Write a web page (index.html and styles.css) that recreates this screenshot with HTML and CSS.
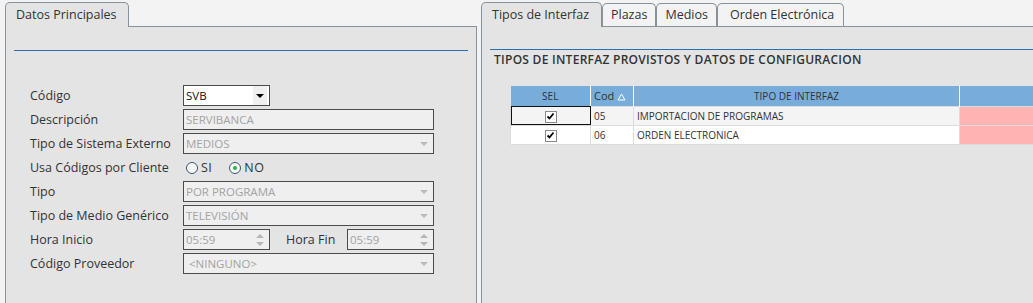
FILE: index.html
```html
<!DOCTYPE html>
<html lang="es">
<head>
    <meta charset="UTF-8">
    <title>Interfaz Externa</title>
    <link rel="stylesheet" href="styles.css">
</head>
<body>
<div class="screen">
    <section class="panel panel-left">
        <div class="tabs">
            <div class="tab active">Datos Principales</div>
        </div>
        <div class="panel-body">
            <div class="rule"></div>
            <div class="form">
                <label>Código</label>
                <div class="field small select enabled">
                    <span>SVB</span>
                    <span class="drop"><i class="tri dark"></i></span>
                </div>

                <label>Descripción</label>
                <div class="field"><span>SERVIBANCA</span></div>

                <label>Tipo de Sistema Externo</label>
                <div class="field select"><span>MEDIOS</span><span class="drop"><i class="tri"></i></span></div>

                <label>Usa Códigos por Cliente</label>
                <div class="radios">
                    <span class="radio"><i class="dot"></i>SI</span>
                    <span class="radio checked"><i class="dot"></i>NO</span>
                </div>

                <label>Tipo</label>
                <div class="field select"><span>POR PROGRAMA</span><span class="drop"><i class="tri"></i></span></div>

                <label>Tipo de Medio Genérico</label>
                <div class="field select"><span>TELEVISIÓN</span><span class="drop"><i class="tri"></i></span></div>

                <label>Hora Inicio</label>
                <div class="hours">
                    <div class="field small spin"><span>05:59</span><span class="arrows"><i class="up"></i><i class="down"></i></span></div>
                    <span class="inline-label">Hora Fin</span>
                    <div class="field small spin"><span>05:59</span><span class="arrows"><i class="up"></i><i class="down"></i></span></div>
                </div>

                <label>Código Proveedor</label>
                <div class="field select"><span class="none">&lt;NINGUNO&gt;</span><span class="drop"><i class="tri"></i></span></div>
            </div>
        </div>
    </section>

    <section class="panel panel-right">
        <div class="tabs">
            <div class="tab active">Tipos de Interfaz</div>
            <div class="tab">Plazas</div>
            <div class="tab">Medios</div>
            <div class="tab wide">Orden Electrónica</div>
        </div>
        <div class="panel-body">
            <div class="rule"></div>
            <h2>TIPOS DE INTERFAZ PROVISTOS Y DATOS DE CONFIGURACION</h2>
            <table class="grid">
                <thead>
                    <tr>
                        <th class="c-sel">SEL</th>
                        <th class="c-cod">Cod <svg class="sort" width="9" height="8" viewBox="0 0 9 8"><path d="M4.5 1 L8 7 L1 7 Z" fill="none" stroke="#fff" stroke-width="1"/></svg></th>
                        <th class="c-tipo">TIPO DE INTERFAZ</th>
                        <th class="c-extra"></th>
                    </tr>
                </thead>
                <tbody>
                    <tr class="odd">
                        <td class="c-sel focus"><span class="check"><svg width="9" height="9" viewBox="0 0 9 9"><path d="M1.5 4.5 L3.5 6.5 L7.5 1.5" fill="none" stroke="#000" stroke-width="1.8"/></svg></span></td>
                        <td>05</td>
                        <td>IMPORTACION DE PROGRAMAS</td>
                        <td class="pink"></td>
                    </tr>
                    <tr>
                        <td class="c-sel"><span class="check"><svg width="9" height="9" viewBox="0 0 9 9"><path d="M1.5 4.5 L3.5 6.5 L7.5 1.5" fill="none" stroke="#000" stroke-width="1.8"/></svg></span></td>
                        <td>06</td>
                        <td>ORDEN ELECTRONICA</td>
                        <td class="pink"></td>
                    </tr>
                </tbody>
            </table>
        </div>
    </section>
</div>
</body>
</html>
```

FILE: styles.css
```css
body {
    margin: 0;
    background-color: #f3f3f3;
    font-family: "Open Sans", Arial, sans-serif;
    font-size: 12.5px;
    color: #333;
    overflow: hidden;
}
.screen {
    display: flex;
    gap: 4px;
    padding: 2px 0 0 5px;
    height: 301px;
    overflow: hidden;
}
.panel {
    display: flex;
    flex-direction: column;
}
.panel-left {
    width: 472px;
    flex: none;
}
.panel-right {
    width: 620px;
    flex: none;
}
.tabs {
    display: flex;
    align-items: flex-end;
    height: 24px;
}
.tab {
    box-sizing: border-box;
    height: 23px;
    border: 1px solid #87929a;
    border-bottom: 0;
    border-radius: 5px 5px 0 0;
    padding: 0 8px;
    line-height: 22px;
    white-space: nowrap;
    color: #333;
}
.tab.wide {
    width: 127px;
    padding: 0 12px;
}
.tab.active {
    position: relative;
    height: 25px;
    margin-bottom: -1px;
    padding: 0 10px;
    background: #e4e4e4;
    line-height: 24px;
}
.panel-left .tab.active {
    width: 124px;
}
.panel-right .tab.active {
    width: 121px;
}
.panel-body {
    flex: 1;
    background: #e4e4e4;
    border: 1px solid #87929a;
    border-bottom: 0;
    overflow: hidden;
}
.panel-left .panel-body {
    padding: 23px 8px 0 8px;
}
.panel-right .panel-body {
    padding: 22px 0 0 8px;
    border-right: 0;
}
.rule {
    height: 1px;
    background: #2a6fae;
}

/* formulario */
.form {
    display: grid;
    grid-template-columns: 153px 251px;
    grid-auto-rows: 21px;
    row-gap: 3px;
    margin: 34px 0 0 16px;
}
.form label {
    display: flex;
    align-items: center;
}
.field {
    box-sizing: border-box;
    display: flex;
    align-items: center;
    height: 21px;
    border: 1px solid #4b4b4b;
    background: #efefef;
    color: #a3a3a3;
    font-size: 11.5px;
    padding-left: 2px;
}
.field > span:first-child {
    flex: 1;
}
.field .none {
    padding-left: 3px;
}
.field.small {
    width: 87px;
}
.field.enabled {
    background: #fff;
    color: #111;
}
.drop {
    display: flex;
    align-items: center;
    justify-content: center;
    width: 14px;
    height: 19px;
    margin-right: 2px;
}
.enabled .drop {
    background: #f0f0f0;
}
.tri {
    width: 0;
    height: 0;
    border-left: 4px solid transparent;
    border-right: 4px solid transparent;
    border-top: 4px solid #bdbdbd;
}
.tri.dark {
    border-top-color: #000;
}
.arrows {
    display: flex;
    flex-direction: column;
    align-items: center;
    gap: 4px;
    width: 14px;
    margin-right: 2px;
}
.arrows .up,
.arrows .down {
    width: 0;
    height: 0;
    border-left: 4px solid transparent;
    border-right: 4px solid transparent;
}
.arrows .up {
    border-bottom: 4px solid #b5b5b5;
}
.arrows .down {
    border-top: 4px solid #b5b5b5;
}
.radios {
    display: flex;
    align-items: center;
    gap: 17px;
    padding-left: 3px;
}
.radio {
    display: flex;
    align-items: center;
    gap: 3px;
    letter-spacing: 0.5px;
}
.radio .dot {
    box-sizing: border-box;
    width: 12px;
    height: 12px;
    border: 1px solid #3b5572;
    border-radius: 50%;
    background: #f8f8f8;
    display: flex;
    align-items: center;
    justify-content: center;
}
.radio.checked .dot::after {
    content: "";
    width: 4px;
    height: 4px;
    border-radius: 50%;
    background: #2db24a;
}
.hours {
    display: flex;
    align-items: center;
}
.inline-label {
    width: 61px;
    padding-left: 16px;
}

/* grilla */
h2 {
    margin: 2px 0 0 4px;
    font-size: 12px;
    font-weight: 600;
    letter-spacing: 0.27px;
    color: #333;
    line-height: 16px;
}
.grid {
    width: 549px;
    margin: 18px 0 0 20px;
    border-collapse: collapse;
    table-layout: fixed;
    font-size: 10px;
}
.grid th {
    height: 20px;
    padding: 0 3px;
    background: #78acd9;
    border-right: 1px solid #fff;
    font-weight: normal;
    color: #333;
    text-align: center;
    box-sizing: border-box;
}
.grid th.c-cod {
    text-align: left;
    font-size: 11px;
}
.sort {
    vertical-align: -1px;
}
.c-sel { width: 80px; }
.c-cod { width: 43px; }
.c-tipo { width: 326px; }
.c-extra { width: 100px; }
.grid td {
    height: 19px;
    padding: 0 3px;
    box-sizing: border-box;
    border: 1px solid #dcdcdc;
    background: #fff;
    color: #333;
    white-space: nowrap;
}
.grid tr.odd td {
    background: #f4f4f4;
}
.grid td.c-sel {
    text-align: center;
    padding: 0;
}
.grid td.focus {
    outline: 1px solid #111;
    outline-offset: -1px;
}
.grid td.pink,
.grid tr.odd td.pink {
    background: #ffb3b3;
}
.check {
    display: inline-flex;
    align-items: center;
    justify-content: center;
    box-sizing: border-box;
    width: 12px;
    height: 12px;
    border: 1px solid #8a8a8a;
    background: #fff;
    vertical-align: middle;
}
```
